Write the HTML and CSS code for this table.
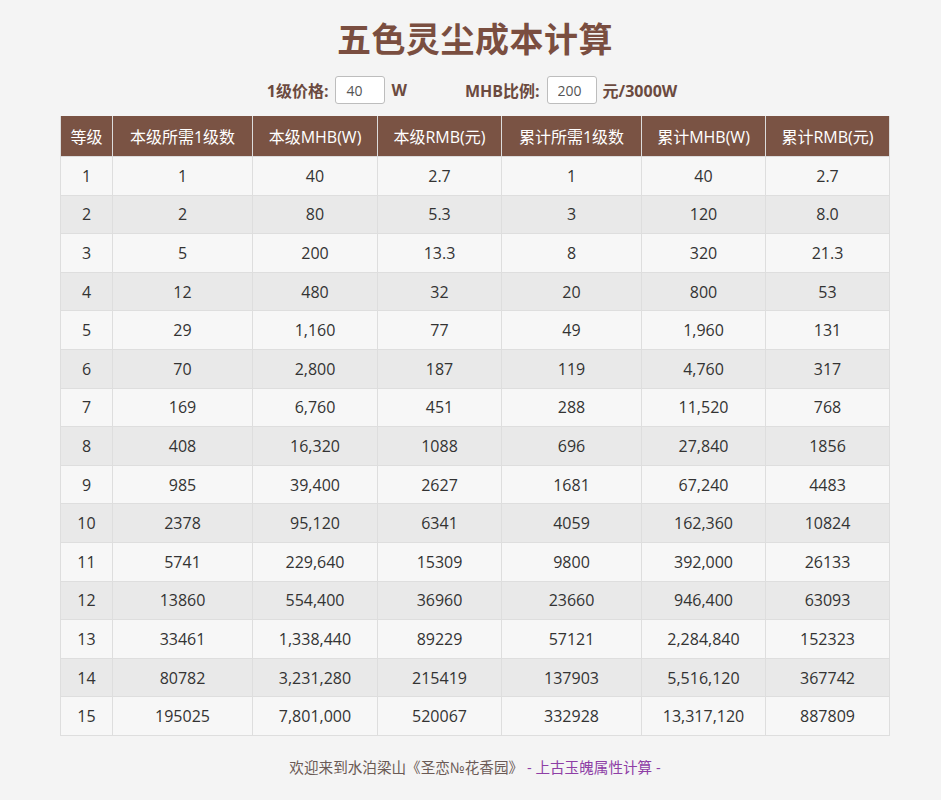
FILE: index.html
```html
<!DOCTYPE html>
<html lang="zh">
<head>
<meta charset="utf-8">
<title>五色灵尘成本计算</title>
<link rel="stylesheet" href="styles.css">
</head>
<body>
<div class="page">
  <h1 class="title">五色灵尘成本计算</h1>
  <div class="controls">
    <label class="group"><span class="lbl">1级价格:</span><input class="num" type="text" value="40"><span class="unit">W</span></label>
    <label class="group"><span class="lbl">MHB比例:</span><input class="num" type="text" value="200"><span class="unit">元/3000W</span></label>
  </div>
  <table class="tbl">
    <colgroup>
      <col class="c0"><col class="c1"><col class="c2"><col class="c3"><col class="c4"><col class="c5"><col class="c6">
    </colgroup>
    <thead>
      <tr><th>等级</th><th>本级所需1级数</th><th>本级MHB(W)</th><th>本级RMB(元)</th><th>累计所需1级数</th><th>累计MHB(W)</th><th>累计RMB(元)</th></tr>
    </thead>
    <tbody>
      <tr><td>1</td><td>1</td><td>40</td><td>2.7</td><td>1</td><td>40</td><td>2.7</td></tr>
      <tr><td>2</td><td>2</td><td>80</td><td>5.3</td><td>3</td><td>120</td><td>8.0</td></tr>
      <tr><td>3</td><td>5</td><td>200</td><td>13.3</td><td>8</td><td>320</td><td>21.3</td></tr>
      <tr><td>4</td><td>12</td><td>480</td><td>32</td><td>20</td><td>800</td><td>53</td></tr>
      <tr><td>5</td><td>29</td><td>1,160</td><td>77</td><td>49</td><td>1,960</td><td>131</td></tr>
      <tr><td>6</td><td>70</td><td>2,800</td><td>187</td><td>119</td><td>4,760</td><td>317</td></tr>
      <tr><td>7</td><td>169</td><td>6,760</td><td>451</td><td>288</td><td>11,520</td><td>768</td></tr>
      <tr><td>8</td><td>408</td><td>16,320</td><td>1088</td><td>696</td><td>27,840</td><td>1856</td></tr>
      <tr><td>9</td><td>985</td><td>39,400</td><td>2627</td><td>1681</td><td>67,240</td><td>4483</td></tr>
      <tr><td>10</td><td>2378</td><td>95,120</td><td>6341</td><td>4059</td><td>162,360</td><td>10824</td></tr>
      <tr><td>11</td><td>5741</td><td>229,640</td><td>15309</td><td>9800</td><td>392,000</td><td>26133</td></tr>
      <tr><td>12</td><td>13860</td><td>554,400</td><td>36960</td><td>23660</td><td>946,400</td><td>63093</td></tr>
      <tr><td>13</td><td>33461</td><td>1,338,440</td><td>89229</td><td>57121</td><td>2,284,840</td><td>152323</td></tr>
      <tr><td>14</td><td>80782</td><td>3,231,280</td><td>215419</td><td>137903</td><td>5,516,120</td><td>367742</td></tr>
      <tr><td>15</td><td>195025</td><td>7,801,000</td><td>520067</td><td>332928</td><td>13,317,120</td><td>887809</td></tr>
    </tbody>
  </table>
  <p class="footer">欢迎来到水泊梁山《圣恋№花香园》 <span class="link">- 上古玉魄属性计算 -</span></p>
</div>
</body>
</html>
```
FILE: styles.css
```css
html, body {
  margin: 0;
  padding: 0;
  background: #f4f4f4;
}
body {
  font-family: "Open Sans", "Noto Sans CJK SC", sans-serif;
  color: #333;
}
.page {
  width: 830px;
  padding: 0 52px 0 60px;
}
.title {
  margin: 0;
  padding-top: 16px;
  height: 58px;
  text-align: center;
  font-family: "Noto Sans CJK SC", sans-serif;
  font-size: 34px;
  font-weight: 700;
  line-height: 44px;
  color: #7a4e40;
  box-sizing: content-box;
  letter-spacing: 0.5px;
}
.controls {
  display: flex;
  justify-content: center;
  align-items: center;
  gap: 58px;
  height: 32px;
  margin: 0 0 10px -6px;
}
.group {
  display: flex;
  align-items: center;
  font-size: 16px;
  font-weight: 700;
  color: #6b4a3f;
}
.lbl { margin-right: 7px; }
.unit { margin-left: 6px; }
.num {
  width: 50px;
  height: 28px;
  box-sizing: border-box;
  border: 1px solid #bdbdbd;
  border-radius: 3px;
  background: #fff;
  padding: 0 0 0 10px;
  font-family: "Open Sans", sans-serif;
  font-size: 14px;
  color: #555;
}
.tbl {
  width: 829px;
  border-collapse: collapse;
  table-layout: fixed;
  margin-top: 0;
  font-size: 16px;
}
.c0 { width: 52px; }
.c1 { width: 140px; }
.c2 { width: 125px; }
.c3 { width: 124px; }
.c4 { width: 140px; }
.c5 { width: 124px; }
.c6 { width: 124px; }
.tbl th {
  background: #7a5344;
  color: #fff;
  font-weight: 400;
  height: 40px;
  padding: 0;
  border: 1px solid #dcdcdc;
  border-top: none;
  text-align: center;
}
.tbl td {
  height: 37.6px;
  padding: 0;
  border: 1px solid #dedede;
  text-align: center;
  color: #333;
}
.tbl tbody tr:nth-child(odd) td { background: #f7f7f7; }
.tbl tbody tr:nth-child(even) td { background: #e9e9e9; }
.footer {
  margin: 20px 0 0 0;
  text-align: center;
  font-size: 14.6px;
  color: #6b5a55;
}
.link { color: #8e3fa6; }
```
